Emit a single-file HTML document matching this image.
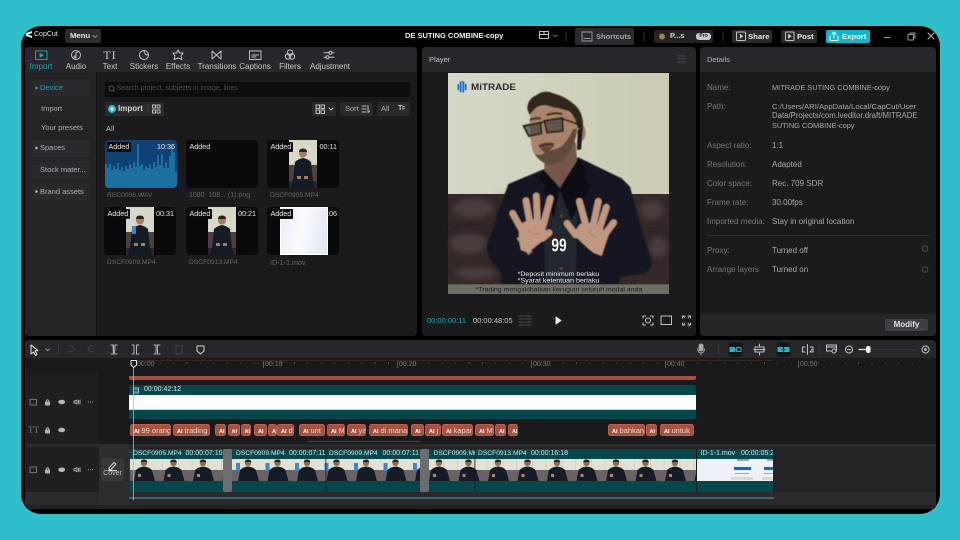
<!DOCTYPE html>
<html lang="en">
<head>
<meta charset="utf-8">
<title>CapCut</title>
<style>
html,body{margin:0;padding:0;width:960px;height:540px;overflow:hidden;background:#30bfca}
*{box-sizing:border-box}
body{font-family:"Liberation Sans",sans-serif;font-size:8px;color:#c9c9cc}
.a{position:absolute}
.t{position:absolute;white-space:nowrap;line-height:10px;height:10px;margin-top:-5px}
.c{transform:translateX(-50%)}
.g{color:#77777b}
.v{color:#a9a9ad}
.b{font-weight:bold}
.m{font-size:6.7px;color:#66666a}
.s{font-size:7.5px}
.box{position:absolute;background:#29292d;border-radius:2px}
.thumb{position:absolute;width:72px;height:48px;background:#0a0a0c;border-radius:4px;overflow:hidden}
.tag{position:absolute;left:2px;top:2px;height:10px;padding:0 1.5px;background:#0b0b0d;color:#e8e8e8;font-size:7.2px;line-height:10px;border-radius:1px}
.dur{position:absolute;right:2px;top:2px;color:#e6e6e6;font-size:7.2px;line-height:10px}
.chip{position:absolute;top:424px;height:12px;background:#a5513f;border-radius:2.5px;color:#e9d6d0;font-size:7.5px;line-height:12px;overflow:hidden;white-space:nowrap;padding-left:3px;border:.5px solid #b7604c}
.chip b{font-size:5.5px;margin-right:2px;color:#fff}
.cl{position:absolute;top:454px;color:#d3e3e4;font-size:6.7px;line-height:10px;height:10px;margin-top:-5px;white-space:nowrap}
.tm{font-size:7px}
.rt{position:absolute;top:359.5px;color:#77777b;font-size:7px;line-height:10px;white-space:nowrap}
</style>
</head>
<body>
<div class="a" style="left:21px;top:26px;width:919px;height:488px;background:#000;border-radius:20px"></div>

<!-- left panel -->
<div class="a" style="left:25px;top:47px;width:392px;height:289px;background:#1b1b1e;border-radius:4px;overflow:hidden">
  <div class="a" style="left:0;top:0;width:392px;height:25px;background:#27272b"></div>
  <div class="a" style="left:0;top:25px;width:72px;height:264px;background:#232326;border-right:1px solid #141416"></div>
</div>
<!-- player -->
<div class="a" style="left:422px;top:47px;width:274px;height:289px;background:#1b1b1e;border-radius:4px;overflow:hidden">
  <div class="a" style="left:0;top:0;width:274px;height:25px;background:#27272b"></div>
</div>
<!-- details -->
<div class="a" style="left:700px;top:47px;width:236px;height:289px;background:#1b1b1e;border-radius:4px;overflow:hidden">
  <div class="a" style="left:0;top:0;width:236px;height:25px;background:#27272b"></div>
  <div class="a" style="left:0;top:267px;width:236px;height:22px;background:#252528"></div>
</div>
<!-- timeline -->
<div class="a" style="left:25px;top:340px;width:911px;height:169px;background:#1a1a1c;border-radius:4px;overflow:hidden">
  <div class="a" style="left:0;top:0;width:911px;height:18px;background:#27272b"></div>
  <div class="a" style="left:0;top:33px;width:74px;height:71px;background:#1f1f22"></div>
  <div class="a" style="left:0;top:104px;width:911px;height:65px;background:#2a2a2d"></div>
  <div class="a" style="left:0;top:107px;width:74px;height:45px;background:#1f1f22"></div>
  <div class="a" style="left:74px;top:104px;width:30px;height:65px;background:#2c2c2f"></div>
  <div class="a" style="left:104px;top:107px;width:807px;height:45px;background:#232326"></div>
  <div class="a" style="left:0;top:165px;width:911px;height:4px;background:#232326"></div>
</div>

<!-- top bar -->
<div class="t" style="left:34px;top:35px;color:#e8e8e8;font-size:7px">CopCut</div>
<div class="box" style="left:65px;top:29px;width:36px;height:14px;background:#2e2e32"></div>
<div class="t b" style="left:70px;top:36px;color:#e6e6e6;font-size:7.7px">Menu</div>
<div class="t b" style="left:405px;top:36px;color:#f2f2f2;font-size:7.5px">DE SUTING COMBINE-copy</div>
<div class="box" style="left:575px;top:28px;width:59px;height:17px;background:#2a2a2e"></div>
<div class="t b" style="left:596px;top:37px;color:#a6a6aa;font-size:7.5px">Shortcuts</div>
<div class="box" style="left:654px;top:30px;width:59px;height:13px;background:#232326"></div>
<div class="t b" style="left:670px;top:36px;color:#d8d8d8;font-size:7.5px">P...s</div>
<div class="a b" style="left:696px;top:33px;width:15px;height:7px;background:#c9c9d6;border-radius:3px;color:#222;font-size:5px;line-height:7px;text-align:center">Pro</div>
<div class="box" style="left:732px;top:30px;width:40px;height:13px;background:#2a2a2e"></div>
<div class="t b" style="left:748px;top:36.5px;color:#e8e8e8;font-size:7.7px">Share</div>
<div class="box" style="left:781px;top:30px;width:36px;height:13px;background:#2a2a2e"></div>
<div class="t b" style="left:797px;top:36.5px;color:#e8e8e8;font-size:7.7px">Post</div>
<div class="box" style="left:826px;top:30px;width:44px;height:13px;background:#12b5c9"></div>
<div class="t b" style="left:842px;top:36.5px;color:#f0fbfc;font-size:7.7px">Export</div>

<!-- tabs -->
<div class="t c" style="left:41px;top:66.5px;color:#1ea7b3">Import</div>
<div class="t c" style="left:76px;top:66.5px">Audio</div>
<div class="t c" style="left:110px;top:66.5px">Text</div>
<div class="t c" style="left:144px;top:66.5px">Stickers</div>
<div class="t c" style="left:178px;top:66.5px">Effects</div>
<div class="t c" style="left:217px;top:66.5px">Transitions</div>
<div class="t c" style="left:255px;top:66.5px">Captions</div>
<div class="t c" style="left:290px;top:66.5px">Filters</div>
<div class="t c" style="left:330px;top:66.5px">Adjustment</div>
<div class="t c" style="left:110px;top:55px;font-family:'Liberation Serif',serif;font-size:12px;color:#c9c9cc;letter-spacing:1px">TI</div>

<!-- sidebar -->
<div class="box" style="left:32px;top:79px;width:57px;height:17px"></div>
<div class="t s" style="left:40px;top:88px;color:#1ea7b3">Device</div>
<div class="t s" style="left:41px;top:108.5px;color:#b2b2b6">Import</div>
<div class="t s" style="left:41px;top:128px;color:#b2b2b6">Your presets</div>
<div class="box" style="left:32px;top:139.5px;width:57px;height:17px"></div>
<div class="t s" style="left:40px;top:148px;color:#b2b2b6">Spaces</div>
<div class="box" style="left:32px;top:161px;width:57px;height:17px"></div>
<div class="t s" style="left:40px;top:169.5px;color:#b2b2b6">Stock mater...</div>
<div class="box" style="left:32px;top:183px;width:57px;height:17px"></div>
<div class="t s" style="left:40px;top:191.5px;color:#b2b2b6">Brand assets</div>

<!-- media tools -->
<div class="a" style="left:105px;top:81.5px;width:305px;height:15px;background:#0d0d0f;border-radius:2px"></div>
<div class="t" style="left:116.5px;top:88.7px;color:#4c4c52;font-size:7px">Search project, subjects in image, lines</div>
<div class="box" style="left:105px;top:102px;width:59px;height:14px"></div>
<div class="a" style="left:108px;top:105px;width:8px;height:8px;border-radius:50%;background:#20b6c4"></div>
<div class="t b" style="left:118px;top:109px;color:#d8d8d8">Import</div>
<div class="box" style="left:312px;top:102px;width:24px;height:14px"></div>
<div class="box" style="left:340px;top:102px;width:33px;height:14px"></div>
<div class="t s" style="left:345px;top:109px;color:#b2b2b6">Sort</div>
<div class="box" style="left:377px;top:102px;width:33px;height:14px"></div>
<div class="t s" style="left:381px;top:109px;color:#b2b2b6">All</div>
<div class="t b" style="left:398px;top:109px;color:#c8c8c8;font-size:7px">T<span style="font-size:5px">F</span></div>
<div class="t s" style="left:106px;top:128.5px;color:#b8b8bc">All</div>

<!-- media thumbs -->
<div class="thumb" style="left:105px;top:140px">
  <svg width="72" height="48" style="position:absolute;left:0;top:0"><rect width="72" height="48" fill="#0f4273"/><path stroke="#2384b3" stroke-width="1.4" d="M1 24V48M3 28V48M5 24V48M7 30V48M9 26V48M11 29V48M13 23V48M15 30V48M17 27V48M19 31V48M21 26V48M23 29V48M25 24V48M27 28V48M29 22V48M31 27V48M33 4V48M35 26V48M37 24V48M39 30V48M41 26V48M43 28V48M45 24V48M47 29V48M49 22V48M51 27V48M53 15V48M55 25V48M57 14V48M59 28V48M61 22V48M63 28V48M65 16V48M67 6V48M69 12V48M71 32V48"/></svg>
  <div class="tag">Added</div><div class="dur">10:36</div>
</div>
<div class="thumb" style="left:186px;top:140px"><div class="tag" style="background:none">Added</div></div>
<div class="thumb" style="left:267px;top:140px">
  <svg class="a" style="left:22px;top:0" width="28" height="48" viewBox="0 0 28 48"><use href="#port"/></svg>
  <div class="tag">Added</div><div class="dur">00:11</div>
</div>
<div class="t m" style="left:107px;top:195.5px">REC0006.WAV</div>
<div class="t m" style="left:189px;top:195.5px;font-size:7px">1080&nbsp; 108... (1).png</div>
<div class="t m" style="left:270px;top:195.5px">DSCF0905.MP4</div>
<div class="thumb" style="left:104px;top:207px">
  <svg class="a" style="left:22px;top:0" width="28" height="48" viewBox="0 0 28 48"><use href="#port"/><rect x="6" y="19" width="4" height="8" fill="#3f86c4"/></svg>
  <div class="tag">Added</div><div class="dur">00:31</div>
</div>
<div class="thumb" style="left:186px;top:207px">
  <svg class="a" style="left:22px;top:0" width="28" height="48" viewBox="0 0 28 48"><use href="#port"/></svg>
  <div class="tag">Added</div><div class="dur">00:21</div>
</div>
<div class="thumb" style="left:267px;top:207px">
  <div class="a" style="left:12.5px;top:0;width:48px;height:48px;background:linear-gradient(100deg,#e8eef6,#fafbfd 45%,#dfe7f0);border:1px solid #fff"></div>
  <div class="tag">Added</div><div class="dur">00:06</div>
</div>
<div class="t m" style="left:107px;top:262.5px">DSCF0909.MP4</div>
<div class="t m" style="left:189px;top:262.5px">DSCF0913.MP4</div>
<div class="t m" style="left:270px;top:262.5px;font-size:7.2px">ID-1-1.mov</div>

<!-- player -->
<div class="t" style="left:429px;top:60px;color:#c4c4c8;font-size:7.5px">Player</div>
<svg class="a" style="left:445px;top:70px" width="230" height="230" viewBox="0 0 690 690">
  <defs>
    <linearGradient id="wall" x1="0" y1="0" x2="1" y2="0"><stop offset="0" stop-color="#d5d8c6"/><stop offset="1" stop-color="#cbcbb2"/></linearGradient>
    <filter id="bl" x="-5%" y="-5%" width="110%" height="110%"><feGaussianBlur stdDeviation="1.2"/></filter>
    <filter id="bl2" x="-30%" y="-30%" width="160%" height="160%"><feGaussianBlur stdDeviation="9"/></filter>
  </defs>
  <rect x="9" y="9" width="663" height="663" fill="url(#wall)"/>
  <rect x="9" y="372" width="663" height="272" fill="#332728"/>
  <g filter="url(#bl2)" fill="#4c3d3c">
    <ellipse cx="85" cy="415" rx="60" ry="28"/><ellipse cx="70" cy="520" rx="55" ry="32"/><ellipse cx="620" cy="420" rx="34" ry="28"/><ellipse cx="640" cy="530" rx="26" ry="32"/><ellipse cx="90" cy="610" rx="60" ry="18"/>
  </g>
  <path d="M9 475H150M575 488H672M170 375V470" stroke="#221a1b" stroke-width="6" fill="none" filter="url(#bl2)"/>
  <g filter="url(#bl)">
    <!-- jacket -->
    <path fill="#121822" d="M295 298L190 342L165 410L125 530Q128 570 165 600L168 642H522L526 620L600 610Q622 595 620 575L590 480L555 350L530 325L400 262L360 280Z"/>
    <path fill="#20262e" d="M297 300L345 355L395 270L400 300L392 642H300Z"/>
    <path fill="#0c1119" d="M297 298L283 325L300 345L296 365L325 445L345 360ZM398 264L345 360L378 450L440 345L418 325L425 300Z"/>
    <circle cx="349" cy="438" r="4" fill="#6a4a32"/><circle cx="349" cy="516" r="4" fill="#6a4a32"/><circle cx="349" cy="596" r="4" fill="#6a4a32"/>
    <!-- neck -->
    <path fill="#75564a" d="M298 270L298 302L345 352L396 272L392 215Z"/>
    <!-- ear -->
    <ellipse cx="409" cy="188" rx="13" ry="24" fill="#a07a62"/>
    <!-- face -->
    <path fill="#a9836a" d="M258 122Q248 170 262 238Q275 270 305 282Q330 288 355 268Q392 232 398 165Q385 122 340 112Q290 98 258 122Z"/>
    <path fill="#4f3b30" opacity=".8" d="M268 250Q290 262 300 245Q325 240 345 232Q368 215 384 178L396 175Q392 232 355 268Q330 288 305 282Q280 272 268 250Z"/>
    <path fill="#4a352a" d="M280 226Q300 214 328 220L326 230Q302 224 282 234Z"/>
    <path fill="#6d3f36" d="M286 232Q305 226 324 231Q315 246 298 246Q290 244 286 232Z"/>
    <!-- hair -->
    <path fill="#33261e" d="M247 118Q246 88 275 75Q298 58 325 70Q365 80 395 110Q416 135 414 172Q408 178 398 175Q392 140 372 124Q345 114 325 112Q285 96 262 124L254 135Z"/>
    <path fill="#1b1412" d="M398 180L414 172L408 238L396 240Z"/>
    <!-- glasses -->
    <path d="M236 168L286 158L290 190L252 199Z" fill="#2e2e2a" fill-opacity=".55" stroke="#161616" stroke-width="5"/>
    <path d="M298 152L352 144L354 183L306 188Z" fill="#2e2e2a" fill-opacity=".55" stroke="#161616" stroke-width="5"/>
    <path d="M286 160L298 154M352 146L402 164" stroke="#161616" stroke-width="5" fill="none"/>
    <path d="M255 150Q270 142 288 146M305 135Q330 126 352 132" stroke="#2f221b" stroke-width="6" fill="none"/>
    <!-- cuff -->
    <path d="M215 505L250 555L262 545L222 500Z" fill="#8f8f8a"/>
    <!-- hands -->
    <g fill="none" stroke="#c09780" stroke-linecap="round" stroke-width="20">
      <path d="M232 482L203 430"/><path d="M255 460L243 392"/><path d="M277 450L274 378"/><path d="M295 465L316 385"/><path d="M292 505L312 488"/>
      <path d="M392 495L366 460"/><path d="M424 470L403 394"/><path d="M445 465L460 394"/><path d="M462 480L484 412"/><path d="M478 495L506 458"/>
    </g>
    <path fill="#c09780" d="M222 470Q240 445 285 448Q305 455 302 490L290 515Q270 530 250 548L228 540Q220 510 222 470Z"/>
    <path fill="#c09780" d="M385 490L405 462Q440 450 470 475L492 492Q480 525 470 558L445 548Q410 520 385 490Z"/>
    <path d="M250 480Q265 500 285 490M430 480Q445 510 462 495" stroke="#a87e68" stroke-width="3" fill="none"/>
  </g>
  <rect x="9" y="643" width="663" height="29" fill="#6e6d63"/>
  <text x="342" y="544" text-anchor="middle" font-family="Liberation Sans" font-weight="bold" font-size="56" fill="#fff" stroke="#000" stroke-width="2" paint-order="stroke" textLength="46" lengthAdjust="spacingAndGlyphs">99</text>
  <text x="218" y="618" font-family="Liberation Sans" font-size="19" fill="#eee" textLength="245" lengthAdjust="spacingAndGlyphs">*Deposit minimum berlaku</text>
  <text x="218" y="638" font-family="Liberation Sans" font-size="19" fill="#eee" textLength="245" lengthAdjust="spacingAndGlyphs">*Syarat ketentuan berlaku</text>
  <text x="92" y="664" font-family="Liberation Sans" font-size="19" fill="#1c1c1c" textLength="500" lengthAdjust="spacingAndGlyphs">*Trading mengakibatkan kerugian seluruh modal anda</text>
  <path d="M40 44V58M47 38V65M55 38V65M62 44V58" stroke="#1f6ecb" stroke-width="5.500" fill="none" stroke-linecap="round"/>
  <path d="M44 38Q51 32 58 38" stroke="#1f6ecb" stroke-width="3" fill="none"/>
  <text x="78" y="60" font-family="Liberation Sans" font-weight="bold" font-size="27" fill="#262a31" textLength="135" lengthAdjust="spacingAndGlyphs">MiTRADE</text>
</svg>
<div class="t" style="left:427px;top:320.5px;color:#1ea7b3;font-size:7.5px">00:00:00:11</div>
<div class="t" style="left:473px;top:320.5px;color:#c4c4c8;font-size:7.5px">00:00:48:05</div>

<!-- details -->
<div class="t" style="left:707px;top:60px;color:#b2b2b6;font-size:7.5px">Details</div>
<div class="t g" style="left:707px;top:87.5px">Name:</div><div class="t v" style="left:772px;top:87.5px;font-size:7.4px">MITRADE SUTING COMBINE-copy</div>
<div class="t g" style="left:707px;top:106.5px">Path:</div>
<div class="t v" style="left:772px;top:106.5px;font-size:7.7px">C:/Users/ARI/AppData/Local/CapCut/User</div>
<div class="t v" style="left:772px;top:116px;font-size:7.8px">Data/Projects/com.lveditor.draft/MITRADE</div>
<div class="t v" style="left:772px;top:126px;font-size:7.4px">SUTING COMBINE-copy</div>
<div class="t g" style="left:707px;top:145.5px">Aspect ratio:</div><div class="t v" style="left:772px;top:145.5px">1:1</div>
<div class="t g" style="left:707px;top:164.5px">Resolution:</div><div class="t v" style="left:772px;top:164.5px">Adapted</div>
<div class="t g" style="left:707px;top:183.5px">Color space:</div><div class="t v" style="left:772px;top:183.5px">Rec. 709 SDR</div>
<div class="t g" style="left:707px;top:202.5px">Frame rate:</div><div class="t v" style="left:772px;top:202.5px">30.00fps</div>
<div class="t g" style="left:707px;top:221.5px">Imported media:</div><div class="t v" style="left:772px;top:221.5px">Stay in original location</div>
<div class="a" style="left:707px;top:235px;width:222px;height:1px;background:#2f2f33"></div>
<div class="t g" style="left:707px;top:251px">Proxy:</div><div class="t v" style="left:772px;top:251px">Turned off</div>
<div class="t g" style="left:707px;top:270px">Arrange layers</div><div class="t v" style="left:772px;top:270px">Turned on</div>
<div class="a b" style="left:885px;top:319px;width:43px;height:12px;background:#3f3f45;border-radius:2px;color:#e0e0e0;font-size:8px;line-height:12px;text-align:center">Modify</div>

<!-- ruler -->
<div class="a" style="left:134px;top:360px;width:640px;height:1px;background:#33291f"></div>
<div class="a" style="left:133px;top:362px;width:790px;height:2px;background:repeating-linear-gradient(90deg,#4a4a4e 0,#4a4a4e .6px,transparent .6px,transparent 13.43px)"></div>
<div class="rt" style="left:137px">00:00</div>
<div class="rt" style="left:265px">00:10</div>
<div class="rt" style="left:399px">00:20</div>
<div class="rt" style="left:533px">00:30</div>
<div class="rt" style="left:667px">00:40</div>
<div class="rt" style="left:800px">00:50</div>
<div class="a" style="left:262.5px;top:361px;width:1px;height:7px;background:#5a5a5e"></div>
<div class="a" style="left:396.5px;top:361px;width:1px;height:7px;background:#5a5a5e"></div>
<div class="a" style="left:530.5px;top:361px;width:1px;height:7px;background:#5a5a5e"></div>
<div class="a" style="left:665px;top:361px;width:1px;height:7px;background:#5a5a5e"></div>
<div class="a" style="left:798px;top:361px;width:1px;height:7px;background:#5a5a5e"></div>

<!-- tracks -->
<div class="a" style="left:129px;top:376px;width:567px;height:4px;background:#a5513f;border-radius:0 0 2px 2px"></div>
<div class="a" style="left:129px;top:385px;width:567px;height:34px;background:#04484e;border-radius:2px"></div>
<div class="a" style="left:129px;top:395px;width:567px;height:15px;background:#fff;border-bottom:.5px solid #c6dfe2"></div>
<div class="cl tm" style="left:144px;top:390px">00:00:42:12</div>

<div class="chip" style="left:130px;width:41px"><b>AI</b>99 orang</div>
<div class="chip" style="left:173px;width:37px"><b>AI</b>trading</div>
<div class="chip" style="left:215px;width:11px"><b>AI</b></div>
<div class="chip" style="left:227.5px;width:12px"><b>AI</b></div>
<div class="chip" style="left:240.5px;width:10px"><b>AI</b></div>
<div class="chip" style="left:254px;width:13px"><b>AI</b></div>
<div class="chip" style="left:268px;width:9px"><b>AI</b></div>
<div class="chip" style="left:277px;width:17px"><b>AI</b>d</div>
<div class="chip" style="left:299px;width:26px"><b>AI</b>unt</div>
<div class="chip" style="left:327px;width:18px"><b>AI</b>M</div>
<div class="chip" style="left:347px;width:19px"><b>AI</b>ya</div>
<div class="chip" style="left:369px;width:39px"><b>AI</b>di mana</div>
<div class="chip" style="left:411px;width:13px"><b>AI</b></div>
<div class="chip" style="left:425px;width:16px"><b>AI</b>j</div>
<div class="chip" style="left:442px;width:31px"><b>AI</b>kapan</div>
<div class="chip" style="left:475px;width:19px"><b>AI</b>M</div>
<div class="chip" style="left:495px;width:11px"><b>AI</b></div>
<div class="chip" style="left:508px;width:10px"><b>AI</b></div>
<div class="chip" style="left:608px;width:37px"><b>AI</b>bahkan</div>
<div class="chip" style="left:645.5px;width:11px"><b>AI</b></div>
<div class="chip" style="left:660px;width:34px"><b>AI</b>untuk</div>
<div class="a" style="left:307px;top:441px;width:114px;height:1px;background:#0b5d63"></div>

<!-- main clips -->
<div class="a" style="left:129px;top:449px;width:644px;height:43px;background:#04484e;border-radius:2px"></div>
<svg class="a" style="left:0;top:0" width="960" height="540">
  <defs>
    <symbol id="port" viewBox="0 0 28 48" width="28" height="48">
      <rect width="28" height="48" fill="#d8d8c8"/>
      <rect y="25" width="28" height="23" fill="#4d4140"/>
      <rect y="41" width="28" height="7" fill="#2b2530"/>
      <path fill="#141b25" d="M4 40L6 22Q9 19 14 18Q19 19 22 22L24 40L26 48H2Z"/>
      <circle cx="14" cy="13.5" r="4" fill="#a87a62"/>
      <path d="M10 12Q10 8.5 14 8.5Q18 8.5 18 12Z" fill="#2a201a"/>
      <rect x="8" y="36" width="4" height="3" fill="#a87a62"/><rect x="15" y="36" width="4" height="3" fill="#a87a62"/>
    </symbol>
    <pattern id="f1" x="129" y="459" width="29.5" height="22" patternUnits="userSpaceOnUse">
      <rect width="29.5" height="22" fill="#e2e1d6"/>
      <path d="M4 0V11M12 0V11M20 0V11" stroke="#d2d2c4" stroke-width="1"/>
      <rect y="11" width="29.5" height="11" fill="#6a6264"/>
      <path fill="#151c28" d="M5 22L7 11Q10 8 15 7.500Q20 8 23 11L26 22Z"/>
      <circle cx="15" cy="3.800" r="3.200" fill="#8e6a55"/><path d="M11.800 3Q12 .5 15 .5Q18 .5 18.200 3Z" fill="#262019"/>
      <rect x="9" y="15" width="3" height="3" fill="#b08a70"/>
    </pattern>
    <pattern id="f2" x="231" y="459" width="29.5" height="22" patternUnits="userSpaceOnUse">
      <rect width="29.5" height="22" fill="#e2e1d6"/>
      <rect y="11" width="29.5" height="11" fill="#6a6264"/>
      <path fill="#151c28" d="M7 22L9 11Q12 8 17 7.500Q22 8 25 11L28 22Z"/>
      <circle cx="17" cy="3.800" r="3.200" fill="#8e6a55"/><path d="M13.800 3Q14 .5 17 .5Q20 .5 20.200 3Z" fill="#262019"/>
      <rect x="5" y="4" width="4" height="8" fill="#3f86c4"/>
    </pattern>
  </defs>
  <rect x="130" y="459" width="100" height="22" fill="url(#f1)"/>
  <rect x="231" y="459" width="198" height="22" fill="url(#f2)"/>
  <rect x="429" y="459" width="267" height="22" fill="url(#f1)"/>
  <rect x="697" y="459" width="76" height="22" fill="#eef2f7"/>
  <g fill="#1767c9"><rect x="734" y="467" width="17" height="3"/><rect x="764" y="467" width="9" height="3"/></g>
  <g fill="#9da6b0"><rect x="737" y="459" width="12" height="2"/><rect x="767" y="459" width="6" height="2"/><rect x="735" y="473" width="14" height="1"/><rect x="764" y="473" width="9" height="1"/><rect x="731" y="477" width="22" height="3" fill="#d4d8de"/><rect x="762" y="477" width="11" height="3" fill="#d4d8de"/></g>
  <g fill="#101a1d"><rect x="325.500" y="449" width=".8" height="43"/><rect x="474.500" y="449" width=".8" height="43"/><rect x="696" y="449" width="1" height="43"/></g>
</svg>
<div class="a" style="left:223px;top:448.5px;width:9px;height:43px;background:#6b6d6f;border-radius:2px"></div>
<div class="a" style="left:420px;top:448.5px;width:9px;height:43px;background:#6b6d6f;border-radius:2px"></div>
<div class="cl" style="left:133px">DSCF0905.MP4</div><div class="cl tm" style="left:185.5px">00:00:07:10</div>
<div class="cl" style="left:236px">DSCF0909.MP4</div><div class="cl tm" style="left:289px">00:00:07:11</div>
<div class="cl" style="left:329px">DSCF0909.MP4</div><div class="cl tm" style="left:382.5px">00:00:07:11</div>
<div class="cl" style="left:433.5px;width:41px;overflow:hidden">DSCF0909.MP4</div>
<div class="cl" style="left:478px">DSCF0913.MP4</div><div class="cl tm" style="left:531px">00:00:16:18</div>
<div class="cl tm" style="left:700.5px">ID-1-1.mov</div><div class="cl tm" style="left:741px;width:32px;overflow:hidden">00:00:05:2</div>
<div class="a" style="left:129px;top:497px;width:645px;height:1.5px;background:#3d6578"></div>

<div class="box" style="left:101px;top:458px;width:23px;height:23px;background:#38383c"></div>
<div class="t c" style="left:112.5px;top:474px;color:#c4c4c8;font-size:7px">Cover</div>
<div class="t" style="left:28px;top:430px;font-family:'Liberation Serif',serif;color:#77777b;font-size:9px">TT</div>

<!-- icons -->
<svg class="a" style="left:0;top:0" width="960" height="540" fill="none" stroke="#c4c4c8" stroke-width="1" stroke-linecap="round" stroke-linejoin="round">
  <path d="M26 33L32 31V33L28 34.500L32 36V38L26 36Z" fill="#eee" stroke="none"/>
  <path d="M93 35.500L95 37.200L97 35.500" stroke="#999"/>
  <!-- tab icons -->
  <rect x="35.500" y="51" width="11.500" height="8.500" stroke="#1ea7b3"/><path d="M40 53.500L43 55.200L40 57Z" fill="#1ea7b3" stroke="#1ea7b3"/>
  <circle cx="76" cy="55" r="4.500"/><path d="M76 57V52.500L78 52"/><circle cx="75" cy="57" r="1"/>
  <circle cx="144" cy="55" r="4.500"/><path d="M144 50.500Q144 55 148.500 55"/>
  <path d="M178 50L179.500 53L183 53L181 56L182 59.500L178 58L174 59.500L175 56L173 53L176.500 53Z"/>
  <path d="M212 51L216.500 55L212 59ZM221 51L216.500 55L221 59Z"/>
  <rect x="249.500" y="51" width="11.500" height="8.500"/><path d="M252 55H258.500M252 57H256"/>
  <circle cx="290" cy="52.700" r="2.700"/><circle cx="288" cy="56.500" r="2.700"/><circle cx="292" cy="56.500" r="2.700"/>
  <path d="M324 52.800H334M324 57.200H334"/><circle cx="330.500" cy="52.800" r="1.500" fill="#27272b"/><circle cx="327.500" cy="57.200" r="1.500" fill="#27272b"/>
  <!-- top right -->
  <rect x="539.500" y="31.500" width="9" height="7"/><path d="M539.500 34.500H548.500M544 31.500V34.500"/><path d="M553 35L555 36.500L557 35" stroke="#777"/>
  <path d="M566 32V41M644 32V41M723 32V41" stroke="#333"/>
  <rect x="582" y="32" width="10" height="9" stroke="#9a9a9e"/><path d="M584 38.500H590" stroke="#9a9a9e"/>
  <circle cx="662" cy="36.500" r="3" fill="#9a8250" stroke="none"/>
  <rect x="736.500" y="32" width="9" height="8.500" rx="1"/><path d="M740 34.500L742.500 36.200L740 38" fill="#eee"/>
  <rect x="785.500" y="32" width="8.500" height="8.500" rx="1"/><path d="M788.500 34.500L791 36.200L788.500 38Z" fill="#eee"/>
  <path d="M830 36V40.500H838V36M834 38V32M832 34L834 32L836 34" stroke="#e8fbfd"/>
  <path d="M884 37.500H890" stroke="#999"/><rect x="908" y="34.500" width="5.500" height="5.500" stroke="#999"/><path d="M910 34.500V33H915V38H913.500" stroke="#999"/>
  <path d="M928 33L934 39M934 33L928 39" stroke="#b5b5b5"/>
  <!-- sidebar dots -->
  <path d="M36 87L37.500 88L36 89Z" fill="#1ea7b3" stroke="#1ea7b3"/><path d="M36 147L37.500 148L36 149Z" fill="#ccc"/><path d="M36 190.500L37.500 191.500L36 192.500Z" fill="#ccc"/>
  <!-- search -->
  <circle cx="111.500" cy="88.500" r="2.500" stroke="#55555a"/><path d="M113.300 90.300L114.500 91.500" stroke="#55555a"/>
  <path d="M110 109H114M112 107V111" stroke="#fff"/>
  <path d="M148 104.500V113.500" stroke="#3c3c40"/>
  <g stroke="#bbb"><rect x="152.500" y="105" width="3" height="3"/><rect x="157" y="105" width="3" height="3"/><rect x="152.500" y="110" width="3" height="3"/><rect x="157" y="110" width="3" height="3"/></g>
  <rect x="316" y="105" width="3.500" height="3.500"/><rect x="321" y="105" width="3.500" height="3.500"/><rect x="316" y="110" width="3.500" height="3.500"/><rect x="321" y="110" width="3.500" height="3.500"/>
  <path d="M329 108L331 110L333 108"/>
  <path d="M362 106H366M362 109H366M362 112H366M368 105.500V112.500L369.500 111"/>
  <!-- player -->
  <path d="M678 56H686M678 59H686M678 62H686" stroke="#4a4a4e"/>
  <g stroke="#3c3c40" stroke-width="1.500"><path d="M519 316H524M519 319H524M519 322H524M519 325H524M526 316H531M526 319H531M526 322H531M526 325H531"/></g>
  <path d="M556 317L561 320.500L556 324Z" fill="#e8e8e8" stroke="#e8e8e8"/>
  <path d="M643 318V316H645.500M650.500 316H653V318M653 323V325H650.500M645.500 325H643V323"/><circle cx="648" cy="320.500" r="2.500"/>
  <rect x="661" y="316" width="10.500" height="8.500"/>
  <path d="M682.500 318V316H685M688 316H690.500V318M690.500 323V325H688M685 325H682.500V323"/><path d="M683 316L685 318M690 316L688 318M683 325L685 323M690 325L688 323" stroke-width=".7"/>
  <!-- details -->
  <circle cx="925" cy="248.500" r="2.800" stroke="#4a4a4e"/><circle cx="925" cy="269.500" r="2.800" stroke="#4a4a4e"/>
  <!-- toolbar -->
  <path d="M31 345L31 354L33.500 352L35.500 355.500L37 354.500L35 351L38 350.500Z" stroke="#e8e8e8"/>
  <path d="M46 349L47.700 350.500L49.400 349" stroke="#999"/>
  <path d="M58.500 345V354" stroke="#38383c"/>
  <path d="M68 351Q73 353 74 349Q73 345 69 346" stroke="#3c3c40"/><path d="M94 351Q89 353 88 349Q89 345 93 346" stroke="#3c3c40"/>
  <path d="M111 345H113L113.500 354H111M117 345H115L114.500 354H117M113.500 345V354" stroke="#b5b5b9"/>
  <path d="M132 345H134V354H132M139 345H136.500V354H139" stroke="#b5b5b9"/>
  <path d="M154 345H156V354H154M160 345H157.500V354H160" stroke="#b5b5b9"/>
  <rect x="176" y="346" width="6" height="8" stroke="#3c3c40"/><path d="M175 346H183" stroke="#3c3c40"/>
  <path d="M197 346H204V351L200.500 354L197 351Z" stroke="#d8d8d8"/>
  <!-- right tools -->
  <rect x="699" y="344" width="4" height="7" rx="2" fill="#aaa" stroke="#aaa"/><path d="M697.500 349Q698 353 701 353Q704 353 704.500 349M701 353V355" stroke="#aaa"/>
  <path d="M718.500 345V354" stroke="#3c3c40"/>
  <rect x="728.500" y="342.500" width="14" height="14" rx="2" fill="#12161a" stroke="none"/>
  <rect x="776.500" y="342.500" width="14" height="14" rx="2" fill="#12161a" stroke="none"/>
  <rect x="730" y="347.500" width="4.500" height="4" fill="#1fb5c3" stroke="#1fb5c3"/><rect x="736.500" y="347.500" width="4.500" height="4" stroke="#1fb5c3"/><path d="M734 349.500H737" stroke="#1fb5c3"/>
  <rect x="778" y="347.500" width="4.500" height="4" fill="#1fb5c3" stroke="#1fb5c3"/><rect x="784.500" y="347.500" width="4.500" height="4" fill="#1fb5c3" stroke="#1fb5c3"/><path d="M782 349.500H785" stroke="#12161a"/>
  <path d="M754 349.500H765"/><rect x="755" y="347" width="9" height="5"/><path d="M759.500 344V346M759.500 353V355"/>
  <path d="M807.500 344.500V354.500M805 347H802.500V352H805M810 347H813V352H810L812 349.500"/>
  <path d="M819 345V354" stroke="#38383c"/>
  <rect x="826.500" y="345" width="10" height="6"/><path d="M826.500 347H836.500"/><circle cx="834" cy="351" r="2" fill="#27272b"/>
  <circle cx="849" cy="349.500" r="3.500"/><path d="M847.500 349.500H850.500"/>
  <path d="M859 349.500H868" stroke="#e8e8e8" stroke-width="1.300"/><path d="M869 349.500H916" stroke="#34343a"/>
  <rect x="866.500" y="346.500" width="3.500" height="6" rx="1.500" fill="#f0f0f0" stroke="#f0f0f0"/>
  <circle cx="925.500" cy="349.500" r="3.500"/><circle cx="925.500" cy="349.500" r=".9" fill="#c4c4c8"/>
  <!-- playhead -->
  <path d="M133.500 366V500" stroke="#b9b9bb" stroke-width=".8"/>
  <path d="M131 360.500H136.500V365L133.700 367.500L131 365Z" fill="#1a1a1c" stroke="#e8e8e8"/>
  <!-- track icons -->
  <g stroke="#77777b">
    <rect x="30" y="399.500" width="6.500" height="5.500"/><rect x="30" y="467" width="6.500" height="5.500"/>
  </g>
  <g stroke="#b5b5b9" stroke-width=".9">
    <rect x="45.500" y="402" width="4" height="3" fill="#b5b5b9"/><path d="M46.300 402V400.500Q47.500 399 48.700 400.500V402"/>
    <rect x="45.500" y="430" width="4" height="3" fill="#b5b5b9"/><path d="M46.300 430V428.500Q47.500 427 48.700 428.500V430"/>
    <rect x="45.500" y="470" width="4" height="3" fill="#b5b5b9"/><path d="M46.300 470V468.500Q47.500 467 48.700 468.500V470"/>
    <ellipse cx="61.700" cy="402" rx="3" ry="1.800" fill="#b5b5b9"/><ellipse cx="61.700" cy="430" rx="3" ry="1.800" fill="#b5b5b9"/><ellipse cx="61.700" cy="469.700" rx="3" ry="1.800" fill="#b5b5b9"/>
    <path d="M74 401H75.500L77 399.800V404.200L75.500 403H74ZM78.500 400.500V403.500M80 400V404"/>
    <path d="M74 468.700H75.500L77 467.500V471.900L75.500 470.700H74ZM78.500 468.200V471.200M80 467.700V471.700"/>
    <path d="M88.500 402H88.600M90.500 402H90.600M92.500 402H92.600M88.500 469.700H88.600M90.500 469.700H90.600M92.500 469.700H92.600"/>
  </g>
  <path d="M109 468L114 462.500L116 464L111 469.500H109ZM108.500 470.500H116.500" stroke="#d8d8d8"/>
  <rect x="133.500" y="388" width="5" height="5" stroke="#a8c8cc"/><path d="M133.500 389.500H138.500M133.500 391.500H138.500" stroke="#a8c8cc" stroke-width=".6"/>
</svg>
</body>
</html>
